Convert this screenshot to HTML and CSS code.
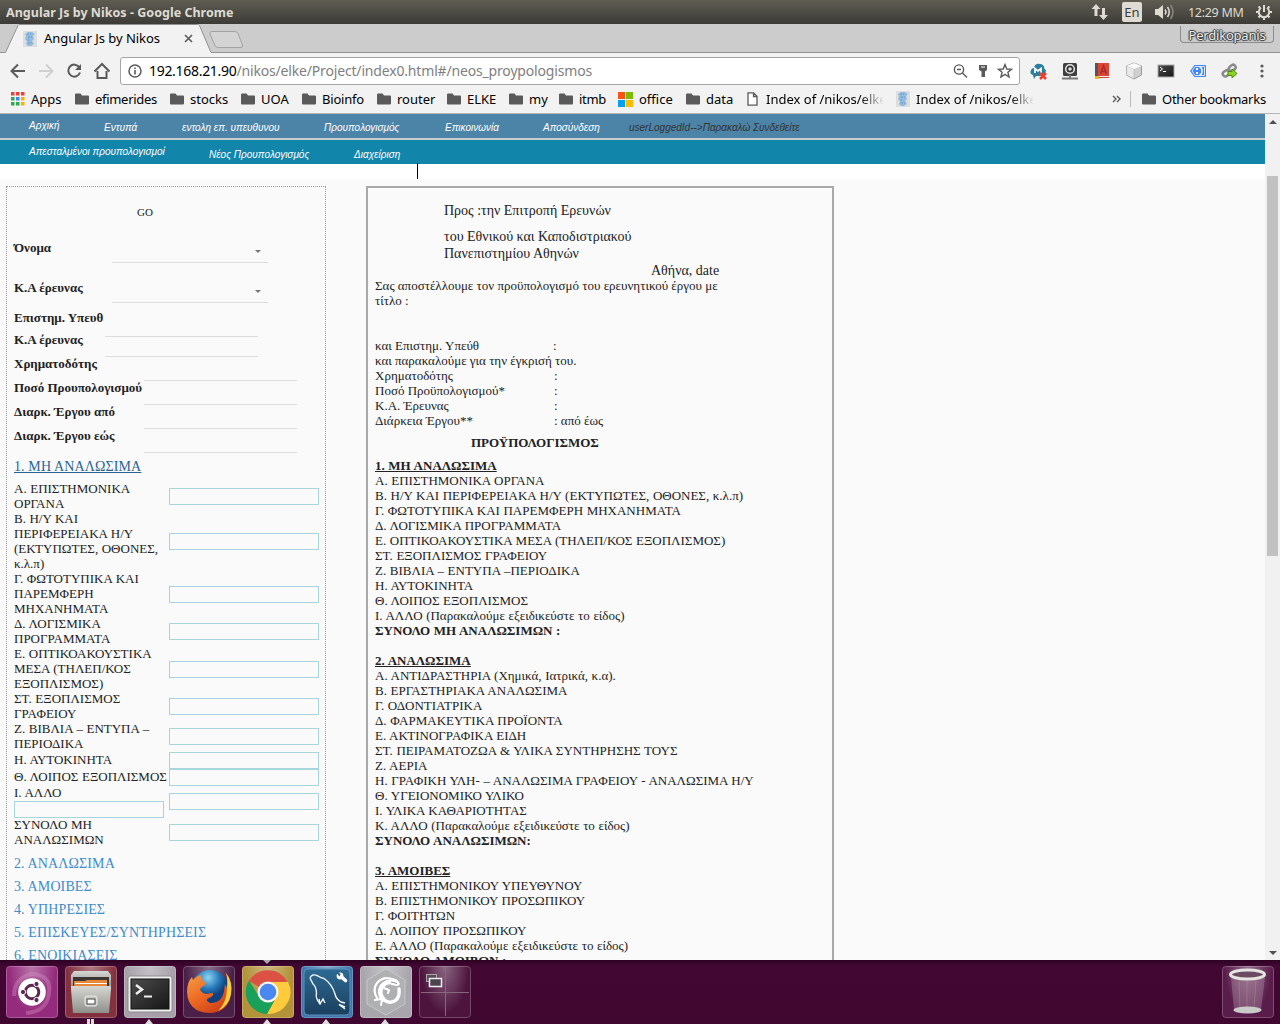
FILE: index.html
```html
<!DOCTYPE html>
<html lang="el">
<head>
<meta charset="utf-8">
<title>Angular Js by Nikos</title>
<link rel="stylesheet" href="styles.css">
</head>
<body>
<svg class="defs" width="0" height="0">
  <defs>
    <symbol id="folder" viewBox="0 0 14 12"><path d="M0 1.5Q0 .5 1 .5H5.5L7 2.5H13Q14 2.5 14 3.5V10.5Q14 11.5 13 11.5H1Q0 11.5 0 10.5Z" fill="#5a5a5a"/></symbol>
    <symbol id="favicon" viewBox="0 0 14 16"><path d="M0 0H14V16H0Z" fill="#dedede"/><path d="M5 1H9L12 3 10 5 11 8 9 10 11 13 8 15H5L3 13 4 10 2 8 3 5 2 3Z" fill="#92bbe0"/><path d="M4 3H8M5 6H9M4 9H7M5 12H9" stroke="#5f9bd0" stroke-dasharray="2 1"/></symbol>
    <linearGradient id="steel" x2="0" y2="1"><stop offset="0" stop-color="#d6d6d2"/><stop offset="1" stop-color="#8f8f8c"/></linearGradient>
    <linearGradient id="dark" x2="1" y2="1"><stop offset="0" stop-color="#4c4c4c"/><stop offset="1" stop-color="#161616"/></linearGradient>
    <radialGradient id="globe" cx=".45" cy=".2"><stop offset="0" stop-color="#8fd4f4"/><stop offset=".6" stop-color="#2678b8"/><stop offset="1" stop-color="#123f7d"/></radialGradient>
    <linearGradient id="fire" x2=".8" y2="1"><stop offset="0" stop-color="#f3a04a"/><stop offset=".5" stop-color="#ee6a22"/><stop offset="1" stop-color="#c93a18"/></linearGradient>
    <linearGradient id="sea" x2="0" y2="1"><stop offset="0" stop-color="#2e6a94"/><stop offset="1" stop-color="#1b3f5e"/></linearGradient>
  </defs>
</svg>
<div class="desktop">
  <header class="titlebar">
    <span class="window-title">Angular Js by Nikos - Google Chrome</span>
    <div class="indicators">
      <svg width="18" height="18" viewBox="0 0 18 18"><path d="M5 1L9.5 6H6.5V13H3.5V6H.5ZM12.500 17L17 12H14V5H11V12H8Z" fill="#dfdbd2"/></svg>
      <span class="lang">En</span>
      <svg class="sound" width="20" height="16" viewBox="0 0 20 16"><path d="M0 5H3L8 1V15L3 11H0Z" fill="#dfdbd2"/><path d="M10 5.500Q12 8 10 10.500M12.500 3Q16 8 12.500 13" fill="none" stroke="#dfdbd2" stroke-width="1.500"/><path d="M15.500 1Q20.500 8 15.500 15" fill="none" stroke="#8b887f" stroke-width="1.500"/></svg>
      <span class="clock">12:29 ΜΜ</span>
      <svg width="16" height="16" viewBox="0 0 16 16"><g fill="none" stroke="#dfdbd2"><path d="M5 3.800A5.200 5.200 0 1 0 11 3.800" stroke-width="2"/><path d="M8 1V8" stroke-width="2"/><path d="M2.500 2.500L4 4M13.500 2.500L12 4M0 8H3M13 8H16M2.500 13.500L4 12M13.500 13.500L12 12M8 13V16" stroke-width="2"/></g></svg>
    </div>
  </header>

  <div class="tabstrip">
    <svg class="tab-shape" width="1280" height="29" viewBox="0 0 1280 29"><path d="M0 28.500H5.500L18 1.500Q18.500.500 20 .500H197.500Q199 .500 199.500 1.500L211 28.500H1280V29H0Z" fill="#f2f2f2"/><path d="M0 28.500H5.500L18 1.500Q18.500.500 20 .500H197.500Q199 .500 199.500 1.500L211 28.500H1280" fill="none" stroke="#929292"/><path d="M212 7.500H235Q237 7.500 238 9.500L242.500 21Q243 23.500 241 23.500H218Q216 23.500 215 21.500L210 10Q209 7.500 212 7.500Z" fill="#d4d4d4" stroke="#a3a3a3"/></svg>
    <svg class="tab-icon" width="14" height="16"><use href="#favicon"/></svg>
    <span class="tab-title">Angular Js by Nikos</span>
    <svg class="tab-close" width="9" height="9" viewBox="0 0 9 9"><path d="M1 1L8 8M8 1L1 8" stroke="#5a5a5a" stroke-width="1.600"/></svg>
    <span class="profile">Perdikopanis</span>
  </div>

  <div class="toolbar">
    <svg class="nav-icons" width="120" height="34" viewBox="0 0 120 34"><g fill="none" stroke="#5a5a5a" stroke-width="2"><path d="M25 18H12M18 11.500L11.500 18L18 24.500"/><path d="M39 18H52M46 11.500L52.500 18L46 24.500" stroke="#d0d0d0"/><path d="M79.300 14.300A6 6 0 1 0 80 19.500"/><path d="M97.500 18V25H106.500V18M94.500 18.500L102 11L109.500 18.500"/></g><path d="M75 17H81V11Z" fill="#5a5a5a"/></svg>
    <div class="omnibox">
      <svg width="14" height="14" viewBox="0 0 14 14"><circle cx="7" cy="7" r="6" fill="none" stroke="#5a5a5a" stroke-width="1.500"/><path d="M6.200 3.500H7.800V5H6.200ZM6.200 6H7.800V10.500H6.200Z" fill="#5a5a5a"/></svg>
      <span class="url"><b>192.168.21.90</b><span>/nikos/elke/Project/index0.html#/neos_proypologismos</span></span>
      <svg class="omni-icons" width="60" height="16" viewBox="0 0 60 16"><g fill="none" stroke="#5a5a5a" stroke-width="1.400"><circle cx="6" cy="6.500" r="4.600"/><path d="M9.500 10L14 14.500M4 6.500H8"/><path d="M52 1.500L53.800 6L58.500 6.300L54.900 9.300L56.100 14L52 11.400L47.900 14L49.100 9.300L45.500 6.300L50.200 6Z"/></g><path d="M26 2H34V7L32 8.500V14H28.500V8.500L26 7Z" fill="#5a5a5a"/><path d="M28 4H32" stroke="#fff"/></svg>
    </div>
    <div class="extensions">
      <svg width="18" height="18" viewBox="0 0 18 18"><path d="M4 13Q0 12 2 8Q3 6 5 6Q6 1 11 2Q15 2 15.500 7Q18 8 16 11L11 14H7L5 17Z" fill="#2b7f9c"/><path d="M6 11V6.500L9 9L12 6.500V11" fill="none" stroke="#fff" stroke-width="1.700"/><path d="M11 11L17 17M17 11L11 17" stroke="#ef3d2c" stroke-width="2.600"/></svg>
      <svg width="18" height="18" viewBox="0 0 18 18"><rect x="2" y="1" width="14" height="13" rx="1.500" fill="#3f3f3f"/><circle cx="9" cy="7" r="4.300" fill="#333" stroke="#e6e6e6" stroke-width="1.500"/><circle cx="9" cy="7" r="1.800" fill="#ddd"/><path d="M1 16.500H17M9 13V17" stroke="#777" stroke-width="2"/></svg>
      <svg width="18" height="18" viewBox="0 0 18 18"><rect x="2" y="1" width="14" height="15" fill="#db4437"/><path d="M2 1H5V16H2Z" fill="#555"/><path d="M7.500 12L10.500 4L13.500 12M8.500 9.500H12.500" fill="none" stroke="#a82d24" stroke-width="1.500"/><path d="M5 14.500H16" stroke="#eee"/><path d="M2 14H6V17H2Z" fill="#f1b52a"/></svg>
      <svg width="18" height="18" viewBox="0 0 18 18"><path d="M9 1L16.500 4V13L9 17L1.500 13V4Z" fill="#d0d0d0" stroke="#999"/><path d="M1.500 4L9 7V17L1.500 13Z" fill="#e8e8e8" stroke="#aaa" stroke-width=".5"/><path d="M9 1L16.500 4L9 7L1.500 4Z" fill="#fafafa"/></svg>
      <svg width="18" height="18" viewBox="0 0 18 18"><rect x="1" y="3" width="16" height="12" fill="url(#dark)" stroke="#aaa"/><path d="M3 5L5.500 7L3 9M6 9.500H9" fill="none" stroke="#fff"/></svg>
      <svg width="18" height="18" viewBox="0 0 18 18"><path d="M5.500 3H16Q17 3 17 4V14Q17 15 16 15H5.500L1 9Z" fill="#4285f4"/><path d="M6 4.500H15.500V13.500H6L3 9Z" fill="none" stroke="#fff" stroke-width=".8"/><path d="M7 6H9V8H7ZM7 10H9V12H7Z" fill="#fff"/><path d="M10.500 5.500H11.500Q13 6 13 9Q13 12 11.500 12.500H10.500" fill="none" stroke="#fff" stroke-width="1.500"/></svg>
      <svg width="18" height="18" viewBox="0 0 18 18"><g fill="none" stroke="#8a8a8a" stroke-width="2.500"><rect x="2" y="9" width="7" height="5" rx="2.500" transform="rotate(-35 5 12)"/><rect x="8" y="3" width="7" height="5" rx="2.500" transform="rotate(-35 12 6)"/></g><path d="M7 9.500H11V7L16 11.500L11 16V13.500H7Z" fill="#8ed320" stroke="#4c8b12"/></svg>
      <svg class="kebab" width="18" height="18" viewBox="0 0 18 18"><g fill="#5a5a5a"><circle cx="9" cy="4" r="1.600"/><circle cx="9" cy="9" r="1.600"/><circle cx="9" cy="14" r="1.600"/></g></svg>
    </div>
  </div>

  <nav class="bookmarks">
    <a class="bm w-apps"><svg width="14" height="14" viewBox="0 0 14 14"><path d="M0 0H3.500V3.500H0ZM5 0H8.500V3.500H5Z" fill="#ea4335"/><path d="M10 0H13.500V3.500H10Z" fill="#ea4335"/><path d="M0 5H3.500V8.500H0ZM0 10H3.500V13.500H0ZM5 10H8.500V13.500H5Z" fill="#2da94f"/><path d="M5 5H8.500V8.500H5Z" fill="#4285f4"/><path d="M10 5H13.500V8.500H10ZM10 10H13.500V13.500H10Z" fill="#fbaf05"/></svg>Apps</a>
    <a class="bm w-efi"><svg width="14" height="12"><use href="#folder"/></svg>efimerides</a>
    <a class="bm w-sto"><svg width="14" height="12"><use href="#folder"/></svg>stocks</a>
    <a class="bm w-uoa"><svg width="14" height="12"><use href="#folder"/></svg>UOA</a>
    <a class="bm w-bio"><svg width="14" height="12"><use href="#folder"/></svg>Bioinfo</a>
    <a class="bm w-rou"><svg width="14" height="12"><use href="#folder"/></svg>router</a>
    <a class="bm w-elk"><svg width="14" height="12"><use href="#folder"/></svg>ELKE</a>
    <a class="bm w-my"><svg width="14" height="12"><use href="#folder"/></svg>my</a>
    <a class="bm w-itm"><svg width="14" height="12"><use href="#folder"/></svg>itmb</a>
    <a class="bm w-off"><svg width="15" height="15" viewBox="0 0 15 15"><path d="M0 0H7V7H0Z" fill="#f65314"/><path d="M8 0H15V7H8Z" fill="#7cbb00"/><path d="M0 8H7V15H0Z" fill="#00a1f1"/><path d="M8 8H15V15H8Z" fill="#ffbb00"/></svg>office</a>
    <a class="bm w-dat"><svg width="14" height="12"><use href="#folder"/></svg>data</a>
    <a class="bm w-doc"><svg width="12" height="14" viewBox="0 0 12 14"><path d="M1 .800H6.500L10 4.300V13.200H1ZM6.500 .800V4.500H10" fill="#fff" stroke="#5a5a5a" stroke-width="1.300"/></svg><span class="fade">Index of /nikos/elke</span></a>
    <a class="bm w-fav"><svg width="14" height="16"><use href="#favicon"/></svg><span class="fade">Index of /nikos/elke</span></a>
    <svg class="more" width="9" height="8" viewBox="0 0 9 8"><path d="M1 1L4 4L1 7M5 1L8 4L5 7" fill="none" stroke="#5a5a5a" stroke-width="1.400"/></svg>
    <span class="divider"></span>
    <a class="bm w-oth"><svg width="14" height="12"><use href="#folder"/></svg>Other bookmarks</a>
  </nav>

  <div class="viewport">
    <div class="page">
      <nav class="menu menu-main">
        <a class="m-home raised">Αρχική</a><a class="m-forms">Εντυπά</a><a class="m-order">εντολη επ. υπευθυνου</a><a class="m-budget">Προυπολογισμός</a><a class="m-contact">Επικοινωνία</a><a class="m-logout">Αποσύνδεση</a><span class="user">userLoggedId--&gt;Παρακαλώ Συνδεθείτε</span>
      </nav>
      <nav class="menu menu-sub">
        <a class="m-sent raised">Απεσταλμένοι προυπολογισμοί</a><a class="m-new">Νέος Προυπολογισμός</a><a class="m-manage">Διαχείριση</a>
      </nav>
      <div class="strip"><i class="caret"></i></div>
      <main class="columns">
        <section class="form">
          <div class="go">GO</div>
          <div class="field f-name"><label>Όνομα</label><span class="select"></span></div>
          <div class="field f-ka"><label>Κ.Α έρευνας</label><span class="select"></span></div>
          <div class="field f-resp"><label>Επιστημ. Υπευθ</label><span class="line"></span></div>
          <div class="field f-ka2"><label>Κ.Α έρευνας</label><span class="line"></span></div>
          <div class="field wide"><label>Χρηματοδότης</label><span class="line"></span></div>
          <div class="field wide"><label>Ποσό Προυπολογισμού</label><span class="line"></span></div>
          <div class="field wide"><label>Διαρκ. Έργου από</label><span class="line"></span></div>
          <div class="field wide"><label>Διαρκ. Έργου εώς</label><span class="line"></span></div>
          <h4 class="open">1. ΜΗ ΑΝΑΛΩΣΙΜΑ</h4>
          <div class="items">
            <div class="item"><p>Α. ΕΠΙΣΤΗΜΟΝΙΚΑ<br>ΟΡΓΑΝΑ</p><i class="box"></i></div>
            <div class="item"><p>Β. Η/Υ ΚΑΙ<br>ΠΕΡΙΦΕΡΕΙΑΚΑ Η/Υ<br>(ΕΚΤΥΠΩΤΕΣ, ΟΘΟΝΕΣ,<br>κ.λ.π)</p><i class="box"></i></div>
            <div class="item"><p>Γ. ΦΩΤΟΤΥΠΙΚΑ ΚΑΙ<br>ΠΑΡΕΜΦΕΡΗ<br>ΜΗΧΑΝΗΜΑΤΑ</p><i class="box"></i></div>
            <div class="item"><p>Δ. ΛΟΓΙΣΜΙΚΑ<br>ΠΡΟΓΡΑΜΜΑΤΑ</p><i class="box"></i></div>
            <div class="item"><p>Ε. ΟΠΤΙΚΟΑΚΟΥΣΤΙΚΑ<br>ΜΕΣΑ (ΤΗΛΕΠ/ΚΟΣ<br>ΕΞΟΠΛΙΣΜΟΣ)</p><i class="box"></i></div>
            <div class="item"><p>ΣΤ. ΕΞΟΠΛΙΣΜΟΣ<br>ΓΡΑΦΕΙΟΥ</p><i class="box"></i></div>
            <div class="item"><p>Ζ. ΒΙΒΛΙΑ – ΕΝΤΥΠΑ –<br>ΠΕΡΙΟΔΙΚΑ</p><i class="box"></i></div>
            <div class="item single"><p>Η. ΑΥΤΟΚΙΝΗΤΑ</p><i class="box"></i></div>
            <div class="item single"><p>Θ. ΛΟΙΠΟΣ ΕΞΟΠΛΙΣΜΟΣ</p><i class="box"></i></div>
            <div class="item"><div class="other"><p>Ι. ΑΛΛΟ</p><i class="box"></i></div><i class="box"></i></div>
            <div class="item"><p>ΣΥΝΟΛΟ ΜΗ<br>ΑΝΑΛΩΣΙΜΩΝ</p><i class="box"></i></div>
          </div>
          <h4>2. ΑΝΑΛΩΣΙΜΑ</h4>
          <h4>3. ΑΜΟΙΒΕΣ</h4>
          <h4>4. ΥΠΗΡΕΣΙΕΣ</h4>
          <h4>5. ΕΠΙΣΚΕΥΕΣ/ΣΥΝΤΗΡΗΣΕΙΣ</h4>
          <h4>6. ΕΝΟΙΚΙΑΣΕΙΣ</h4>
        </section>

        <section class="letter">
          <div class="address">
            <p class="to">Προς :την Επιτροπή Ερευνών</p>
            <p>του Εθνικού και Καποδιστριακού</p>
            <p>Πανεπιστημίου Αθηνών</p>
            <p class="date">Αθήνα, date</p>
          </div>
          <p>Σας αποστέλλουμε τον προϋπολογισμό του ερευνητικού έργου με</p>
          <p class="subject">τίτλο :</p>
          <p class="pair first"><span>και Επιστημ. Υπεύθ</span>:</p>
          <p>και παρακαλούμε για την έγκρισή του.</p>
          <p class="pair"><span>Χρηματοδότης</span>:</p>
          <p class="pair"><span>Ποσό Προϋπολογισμού*</span>:</p>
          <p class="pair"><span>Κ.Α. Έρευνας</span>:</p>
          <p class="pair"><span>Διάρκεια Έργου**</span>: από έως</p>
          <h3>ΠΡΟΫΠΟΛΟΓΙΣΜΟΣ</h3>
          <h5>1. ΜΗ ΑΝΑΛΩΣΙΜΑ</h5>
          <p>Α. ΕΠΙΣΤΗΜΟΝΙΚΑ ΟΡΓΑΝΑ</p>
          <p>Β. Η/Υ ΚΑΙ ΠΕΡΙΦΕΡΕΙΑΚΑ Η/Υ (ΕΚΤΥΠΩΤΕΣ, ΟΘΟΝΕΣ, κ.λ.π)</p>
          <p>Γ. ΦΩΤΟΤΥΠΙΚΑ ΚΑΙ ΠΑΡΕΜΦΕΡΗ ΜΗΧΑΝΗΜΑΤΑ</p>
          <p>Δ. ΛΟΓΙΣΜΙΚΑ ΠΡΟΓΡΑΜΜΑΤΑ</p>
          <p>Ε. ΟΠΤΙΚΟΑΚΟΥΣΤΙΚΑ ΜΕΣΑ (ΤΗΛΕΠ/ΚΟΣ ΕΞΟΠΛΙΣΜΟΣ)</p>
          <p>ΣΤ. ΕΞΟΠΛΙΣΜΟΣ ΓΡΑΦΕΙΟΥ</p>
          <p>Ζ. ΒΙΒΛΙΑ – ΕΝΤΥΠΑ –ΠΕΡΙΟΔΙΚΑ</p>
          <p>Η. ΑΥΤΟΚΙΝΗΤΑ</p>
          <p>Θ. ΛΟΙΠΟΣ ΕΞΟΠΛΙΣΜΟΣ</p>
          <p>Ι. ΑΛΛΟ (Παρακαλούμε εξειδικεύστε το είδος)</p>
          <p class="total">ΣΥΝΟΛΟ ΜΗ ΑΝΑΛΩΣΙΜΩΝ :</p>
          <h5>2. ΑΝΑΛΩΣΙΜΑ</h5>
          <p>Α. ΑΝΤΙΔΡΑΣΤΗΡΙΑ (Χημικά, Ιατρικά, κ.α).</p>
          <p>Β. ΕΡΓΑΣΤΗΡΙΑΚΑ ΑΝΑΛΩΣΙΜΑ</p>
          <p>Γ. ΟΔΟΝΤΙΑΤΡΙΚΑ</p>
          <p>Δ. ΦΑΡΜΑΚΕΥΤΙΚΑ ΠΡΟΪΟΝΤΑ</p>
          <p>Ε. ΑΚΤΙΝΟΓΡΑΦΙΚΑ ΕΙΔΗ</p>
          <p>ΣΤ. ΠΕΙΡΑΜΑΤΟΖΩΑ &amp; ΥΛΙΚΑ ΣΥΝΤΗΡΗΣΗΣ ΤΟΥΣ</p>
          <p>Ζ. ΑΕΡΙΑ</p>
          <p>Η. ΓΡΑΦΙΚΗ ΥΛΗ- – ΑΝΑΛΩΣΙΜΑ ΓΡΑΦΕΙΟΥ - ΑΝΑΛΩΣΙΜΑ Η/Υ</p>
          <p>Θ. ΥΓΕΙΟΝΟΜΙΚΟ ΥΛΙΚΟ</p>
          <p>Ι. ΥΛΙΚΑ ΚΑΘΑΡΙΟΤΗΤΑΣ</p>
          <p>Κ. ΑΛΛΟ (Παρακαλούμε εξειδικεύστε το είδος)</p>
          <p class="total">ΣΥΝΟΛΟ ΑΝΑΛΩΣΙΜΩΝ:</p>
          <h5>3. ΑΜΟΙΒΕΣ</h5>
          <p>Α. ΕΠΙΣΤΗΜΟΝΙΚΟΥ ΥΠΕΥΘΥΝΟΥ</p>
          <p>Β. ΕΠΙΣΤΗΜΟΝΙΚΟΥ ΠΡΟΣΩΠΙΚΟΥ</p>
          <p>Γ. ΦΟΙΤΗΤΩΝ</p>
          <p>Δ. ΛΟΙΠΟΥ ΠΡΟΣΩΠΙΚΟΥ</p>
          <p>Ε. ΑΛΛΟ (Παρακαλούμε εξειδικεύστε το είδος)</p>
          <p class="total">ΣΥΝΟΛΟ ΑΜΟΙΒΩΝ :</p>
        </section>
      </main>
    </div>
    <div class="scrollbar"><i class="arrow up"></i><i class="thumb"></i><i class="arrow down"></i></div>
  </div>

  <footer class="dock">
    <span class="tile ubuntu"><svg width="52" height="52" viewBox="0 0 52 52"><g fill="none" stroke="#d99aca" stroke-opacity=".35"><path d="M24 8Q46 8 43 28Q40 46 20 47M8 30Q8 12 26 8" stroke-width="4"/></g><circle cx="26" cy="26" r="13.800" fill="#fff"/><circle cx="26" cy="26" r="6.800" fill="none" stroke="#5e2750" stroke-width="3"/><g fill="#5e2750" stroke="#fff"><circle cx="17" cy="26" r="2.600"/><circle cx="30.500" cy="18" r="2.600"/><circle cx="30.500" cy="34" r="2.600"/></g></svg></span>
    <span class="tile files two"><svg width="52" height="52" viewBox="0 0 52 52"><path d="M9 5H43L46 9V22H6V9Z" fill="url(#steel)"/><path d="M8 11H44V22H8Z" fill="#3a3634"/><path d="M9 15H20L22 14H42V22H9Z" fill="#e8863a"/><path d="M10 17.500H42" stroke="#fff"/><path d="M6 20H46V23L44 47H8L6 23Z" fill="url(#steel)"/><rect x="20" y="30" width="12" height="10" rx="2" fill="#c9c9c6" stroke="#e6e6e4"/><rect x="22" y="33" width="8" height="5" fill="#fff" stroke="#444"/></svg></span>
    <span class="tile term one"><svg width="52" height="52" viewBox="0 0 52 52"><rect x="4" y="10" width="44" height="36" rx="2" fill="#eee" stroke="#8c8c8c"/><rect x="7" y="13" width="38" height="30" fill="url(#dark)" stroke="#111"/><path d="M12 19L18 23.500L12 28" fill="none" stroke="#eee" stroke-width="2.500"/><path d="M20 30.500H28" stroke="#eee" stroke-width="2"/></svg></span>
    <span class="tile fox"><svg width="52" height="52" viewBox="0 0 52 52"><circle cx="27" cy="23" r="19" fill="url(#globe)"/><path d="M43 7Q50 16 48 28Q45 47 26 47Q5 46 4 26Q4 16 9 11L10 14Q13 10 18 9Q17 13 22 16Q24 18 20 20L17 23Q18 27 23 28L30 27Q31 30 26 32Q21 34 27 37Q38 38 41 26L42 18L44 22Q45 13 43 7Z" fill="url(#fire)"/><path d="M43 7Q50 16 48 28Q46 40 35 45Q44 36 44 22Q45 13 43 7Z" fill="#f8cf3c"/></svg></span>
    <span class="tile chrome one current"><svg width="52" height="52" viewBox="0 0 52 52"><path d="M26 26L7 15A22 22 0 0 1 45.500 16H26Z" fill="#dc5144"/><path d="M26 16H46A22 22 0 0 1 25 48L34.700 31Z" fill="#ffcb3d"/><path d="M17.300 31L7 14.500A22 22 0 0 0 25 48L32 35H26Z" fill="#19a05b"/><circle cx="26" cy="26" r="10.500" fill="#f5f5f5"/><circle cx="26" cy="26" r="8.300" fill="#4a87ee"/></svg></span>
    <span class="tile mysql one"><svg width="52" height="52" viewBox="0 0 52 52"><rect x="3" y="3" width="46" height="46" rx="4" fill="url(#sea)" stroke="#5a94bd"/><path d="M9 12Q11 7 17 10Q20 12 23 12.500Q31 18 34 28Q35 33 40 36L44 37M44 43L38 38.500L44 41M24 37L22 33L19 38Q14 32 15.500 27Q15 20 12 18L9 12M19 38L18 33" fill="none" stroke="#eef5f9" stroke-width="1.400"/><circle cx="39" cy="10" r="3.400" fill="#fff"/><path d="M40 10.500L44.500 14.500" stroke="#fff" stroke-width="3.600" stroke-linecap="round"/><path d="M36 6L39 9.500" stroke="#2b6088" stroke-width="2"/></svg></span>
    <span class="tile lizard one"><svg width="52" height="52" viewBox="0 0 52 52"><path d="M26 3L45 14V38L26 49L7 38V14Z" fill="#aeb0b1" stroke="#c6c8c9"/><g fill="none" stroke="#fff" stroke-linecap="round"><path d="M34 14Q24 9 17 17Q12 24 17 32" stroke-width="2.200"/><path d="M35 17Q27 14 22 20Q18 27 23 33" stroke-width="4.600"/><path d="M23 33Q30 39 36 34Q40 30 39 23" stroke-width="3.400"/><path d="M24 22L29 24L28 27M21 33L15 34M22 34L21 39" stroke-width="2"/></g><path d="M30 13Q37 11 40 18L38 20L31 19Z" fill="#fff"/><path d="M31 16L37 17.500" stroke="#8f9192" stroke-width="1"/></svg></span>
    <span class="tile spaces"><svg width="52" height="52" viewBox="0 0 52 52"><path d="M26.500 2V50M2 26.500H50" stroke="#8c6680"/><rect x="7.500" y="8.500" width="10" height="7" fill="#5a4a55" stroke="#aaa"/><rect x="10.500" y="12.500" width="12" height="8" fill="#4d4450" stroke="#eee" stroke-width="1.500"/></svg></span>
    <span class="tile trash"><svg width="52" height="52" viewBox="0 0 52 52"><path d="M9 12H43L39 44Q26 50 12 44Z" fill="#b9a0b2" fill-opacity=".35"/><path d="M17 14L18 43M25 14V44M34 14L32 43" stroke="#cbb4c5" stroke-opacity=".25"/><ellipse cx="25.500" cy="44" rx="14" ry="3.500" fill="#c9cbc8"/><ellipse cx="25.500" cy="8.500" rx="17" ry="4.500" fill="#6b4a62" stroke="#e4e4e0" stroke-width="3"/></svg></span>
  </footer>
</div>
</body>
</html>
```
FILE: styles.css
```css
* { box-sizing: border-box; }
body { margin: 0; background: #400730; }
p, h3, h4, h5 { margin: 0; }
svg { display: block; flex: none; }
.defs { position: absolute; }
.desktop { width: 1280px; height: 1024px; overflow: hidden; display: flex; flex-direction: column; font-family: "Noto Sans", sans-serif; font-size: 13px; color: #000; }

.titlebar { height: 24px; flex: none; display: flex; justify-content: space-between; align-items: center; padding: 0 8px 0 6px; background: linear-gradient(#5f5d52, #3c3b37); color: #dfdbd2; }
.window-title { font-weight: 700; font-size: 12.5px; letter-spacing: 0.02px; }
.indicators { display: flex; align-items: center; }
.indicators svg:first-child { margin-right: 1px; }
.lang { width: 20px; height: 20px; margin-left: 12px; margin-right: 1px; border-radius: 2px; background: #dfdbd2; color: #3c3b37; line-height: 20px; text-align: center; }
.sound { margin-left: 12px; }
.clock { width: 57px; margin: 0 11px 0 13px; white-space: nowrap; font-size: 12.5px; letter-spacing: -0.3px; }

.tabstrip { height: 29px; flex: none; position: relative; display: flex; align-items: center; background: #ccc; padding: 0 6px 0 23px; }
.tab-shape { position: absolute; left: 0; top: 0; }
.tab-icon, .tab-title, .tab-close { position: relative; }
.tab-title { width: 140px; margin: -2px 0 0 7px; letter-spacing: -0.05px; white-space: nowrap; }
.profile { position: relative; align-self: flex-start; width: 94px; height: 17px; margin: 2px 0 0 auto; border: 1px solid #8c8c8c; border-top: 0; border-radius: 0 0 4px 4px; color: #eee; line-height: 18px; text-align: center; letter-spacing: -0.2px; text-shadow: 0 1px 1px #333, 1px 0 1px #333, -1px 0 1px #333, 0 -1px 1px #333; }

.toolbar { height: 34px; flex: none; display: flex; background: #f2f2f2; }
.omnibox { width: 900px; height: 28px; margin-top: 4px; display: flex; align-items: center; padding: 0 6px 0 7px; background: #fff; border: 1px solid #a5a5a5; border-radius: 3px; }
.url { flex: 1; margin: -2px 0 0 7px; font-size: 14px; color: #808080; letter-spacing: -0.17px; white-space: nowrap; }
.url b { font-weight: 400; color: #000; letter-spacing: -0.3px; }
.extensions { display: flex; gap: 14px; padding: 9px 0 0 9px; }

.bookmarks { height: 27px; flex: none; display: flex; align-items: center; padding: 0 0 2px 11px; background: #f2f2f2; border-bottom: 1px solid #b6b6b6; }
.bm { display: flex; align-items: center; gap: 6px; flex: none; white-space: nowrap; }
.w-apps { width: 64px; } .w-efi { width: 95px; letter-spacing: -0.3px; } .w-sto { width: 71px; } .w-uoa { width: 61px; }
.w-bio { width: 75px; letter-spacing: -0.2px; } .w-rou { width: 70px; } .w-elk { width: 62px; } .w-my { width: 50px; }
.w-itm { width: 59px; letter-spacing: -0.3px; } .w-off { width: 68px; } .w-dat { width: 61px; } .w-doc { width: 149px; } .w-fav { width: 216px; }
.w-oth { letter-spacing: -0.25px; }
.w-doc svg { margin-right: 1px; }
.fade { width: 118px; overflow: hidden; -webkit-mask-image: linear-gradient(90deg, #000 80%, transparent); mask-image: linear-gradient(90deg, #000 80%, transparent); }
.divider { width: 1px; height: 16px; margin: 0 11px 0 9px; background: #bbb; }

.viewport { height: 846px; flex: none; display: flex; overflow: hidden; }
.page { width: 1265px; height: 846px; overflow: hidden; background: linear-gradient(#ccc 40px, #fafafa 40px); font-family: "Liberation Serif", serif; font-size: 13px; line-height: 15px; color: #222; }
.menu { display: flex; height: 24px; padding-left: 29px; font: italic 10px/27px "Liberation Sans", sans-serif; color: #fff; white-space: nowrap; }
.menu-main { background: #4c84a8; }
.menu-sub { background: #1185aa; margin-top: 2px; line-height: 29px; }
.raised { line-height: 23px; }
.m-home { width: 75px; } .m-forms { width: 78px; } .m-order { width: 142px; } .m-budget { width: 121px; } .m-contact { width: 98px; } .m-logout { width: 86px; }
.m-sent { width: 180px; } .m-new { width: 145px; }
.user { color: #333; }
.strip { height: 15px; background: #fff; }
.caret { display: block; width: 1px; height: 16px; margin-left: 417px; background: #000; position: relative; top: -1px; }

.columns { display: flex; align-items: flex-start; gap: 40px; padding: 7px 0 0 6px; }
.form { width: 320px; height: 900px; border: 1px dotted #999; padding: 0 6px 0 7px; }
.go { height: 50px; line-height: 50px; font-size: 11px; padding-left: 123px; }
.field { display: flex; font-weight: 700; line-height: 22px; white-space: nowrap; }
.field label { width: 91px; }
.select { width: 156px; height: 26px; margin-left: 7px; border-bottom: 1px solid #ddd; display: flex; justify-content: flex-end; }
.select::after { content: ""; margin: 13px 7px 0 0; height: 3px; border: 3px solid transparent; border-top-color: #777; border-bottom: 0; }
.line { width: 153px; flex: none; border-bottom: 1px solid #ddd; }
.f-name { height: 40px; }
.f-ka { height: 30px; }
.f-resp { height: 22px; }
.f-resp .line { height: 30px; }
.f-ka2 { height: 23px; }
.f-ka2 .line { height: 28px; }
.wide { height: 24px; line-height: 24px; }
.wide label { width: 130px; }
.wide .line { height: 29px; }
h4 { height: 23px; font-size: 14px; font-weight: 400; line-height: 23px; letter-spacing: 0.12px; color: #428bca; }
h4.open { margin-top: 7px; color: #2a6496; text-decoration: underline; }
.items { padding: 4px 0; }
.item { display: flex; justify-content: space-between; align-items: center; }
.item p { margin: -1px 0 1px; white-space: nowrap; word-spacing: 0.3px; }
.item > p, .other { width: 155px; }
.box { display: block; width: 150px; height: 17px; flex: none; border: 1px solid #a8d5dc; }
.item > .box { margin-bottom: 1px; }
.single > .box { margin-bottom: 0; }

.letter { width: 468px; height: 900px; border: 2px solid #a9a9a9; padding: 14px 0 0 7px; white-space: nowrap; }
.address { padding-left: 69px; font-size: 14px; }
.address p { line-height: 17px; }
.address .to { margin-bottom: 9px; }
.address .date { padding-left: 207px; margin-bottom: -1px; }
.subject { margin-bottom: 30px; }
.pair { display: flex; }
.pair span { width: 179px; }
.pair.first span { width: 178px; }
h3 { padding-left: 96px; font-size: 13px; line-height: 15px; margin: 7px 0 8px; }
h5 { font-size: 13px; line-height: 15px; text-decoration: underline; }
h5, h5 ~ p { word-spacing: 0.35px; }
.total { font-weight: 700; margin-bottom: 15px; }

.scrollbar { width: 15px; background: #f1f1f1; display: flex; flex-direction: column; align-items: center; }
.arrow { border: 4px solid transparent; }
.up { margin-top: 6px; border-top: 0; border-bottom-color: #505050; }
.thumb { width: 11px; height: 380px; margin-top: 52px; background: #c1c1c1; }
.down { margin: auto 0 5px; border-bottom: 0; border-top-color: #505050; }

.dock { height: 64px; flex: none; display: flex; gap: 7px; padding: 6px; background: linear-gradient(#2c0222, #420733 6px, #400730); }
.tile { position: relative; width: 52px; height: 52px; border-radius: 4px; box-shadow: inset 0 0 0 1px rgba(255,255,255,.22); background: radial-gradient(ellipse at 50% 0, rgba(255,255,255,.35), transparent 65%), var(--tint); }
.ubuntu { --tint: #942b7c; }
.files { --tint: #84313f; }
.term { --tint: #a7a0aa; }
.fox { --tint: #4a2048; }
.chrome { --tint: #b2933a; }
.mysql { --tint: #3f76ad; }
.lizard { --tint: #a9a5ac; }
.spaces { --tint: #4d153e; }
.trash { --tint: #5a1d4b; margin-left: auto; }
.one::after, .two::after { content: ""; position: absolute; left: 21px; top: 53px; border: 4px solid transparent; border-bottom: 5px solid #ddd; border-top: 0; }
.two::after { left: 22px; width: 1px; height: 5px; border: solid #ddd; border-width: 0 3px; }
.current::before { content: ""; position: absolute; left: 21px; top: -6px; border: 4px solid transparent; border-top-color: #aaa; border-bottom: 0; }
```
